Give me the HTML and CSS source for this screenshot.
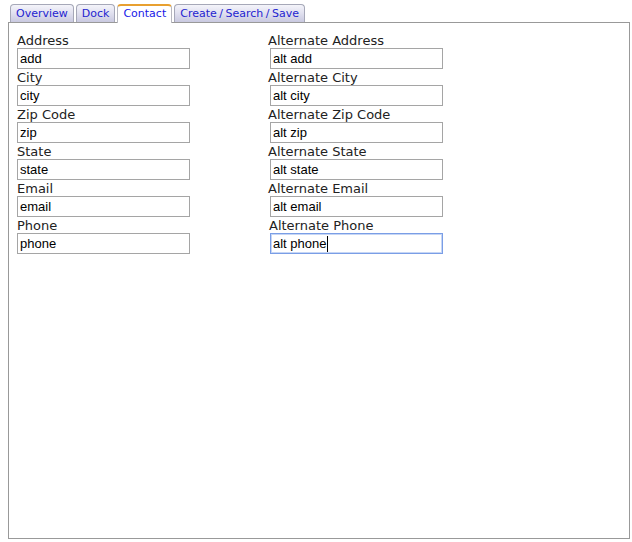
FILE: index.html
```html
<!DOCTYPE html>
<html>
<head>
<meta charset="utf-8">
<link rel="stylesheet" href="styles.css">
</head>
<body>
<div class="tabbar">
  <div class="tab">Overview</div>
  <div class="tab">Dock</div>
  <div class="tab selected">Contact</div>
  <div class="tab">Create<span class="sl">/</span>Search<span class="sl">/</span>Save</div>
  <div class="tab-rest"></div>
</div>
<div class="panel">
  <div class="form">
    <div class="col left">
      <label class="lbl">Address</label>
      <input class="field" type="text" value="add">
      <label class="lbl">City</label>
      <input class="field" type="text" value="city">
      <label class="lbl">Zip Code</label>
      <input class="field" type="text" value="zip">
      <label class="lbl">State</label>
      <input class="field" type="text" value="state">
      <label class="lbl">Email</label>
      <input class="field" type="text" value="email">
      <label class="lbl">Phone</label>
      <input class="field" type="text" value="phone">
    </div>
    <div class="col right">
      <label class="lbl">Alternate Address</label>
      <input class="field" type="text" value="alt add">
      <label class="lbl">Alternate City</label>
      <input class="field" type="text" value="alt city">
      <label class="lbl">Alternate Zip Code</label>
      <input class="field" type="text" value="alt zip">
      <label class="lbl">Alternate State</label>
      <input class="field" type="text" value="alt state">
      <label class="lbl">Alternate Email</label>
      <input class="field" type="text" value="alt email">
      <label class="lbl shifted">Alternate Phone</label>
      <div class="focus-wrap">
        <input class="field focused" type="text" value="alt phone">
        <span class="caret"></span>
      </div>
    </div>
  </div>
</div>
</body>
</html>
```

FILE: styles.css
```css
html, body {
  margin: 0;
  padding: 0;
  background: #fff;
}
body {
  padding: 4px 0 0 8px;
  font-family: "DejaVu Sans", Verdana, sans-serif;
}
.tabbar {
  display: flex;
  align-items: flex-end;
  width: 622px;
  height: 18px;
}
.tab {
  box-sizing: border-box;
  height: 18px;
  margin-left: 2px;
  padding: 0 5px;
  border: 1px solid #a6a8b8;
  border-bottom: none;
  border-radius: 4px 4px 0 0;
  background: linear-gradient(to bottom, #f4f4fa 0%, #e2e2f0 45%, #c9c9e0 100%);
  color: #2424d0;
  font-size: 11px;
  line-height: 17px;
  white-space: nowrap;
}
.tab .sl {
  margin: 0 2.5px;
}
.tab.selected {
  background: #fff;
  border-top: 2px solid #e8a030;
  border-left-color: #b8b8c0;
  border-right-color: #b8b8c0;
  line-height: 16px;
  height: 19px;
  margin-bottom: -1px;
  position: relative;
  color: #1818e8;
}
.tab-rest {
  flex: 1;
}
.panel {
  box-sizing: border-box;
  width: 622px;
  height: 517px;
  border: 1px solid #999;
  padding: 9px 8px 0 8px;
}
.form {
  display: flex;
}
.col {
  display: flex;
  flex-direction: column;
  align-items: flex-start;
}
.col.left {
  width: 251px;
}
.lbl {
  font-size: 13px;
  line-height: 18px;
  height: 16px;
  overflow: visible;
  color: #222;
  white-space: nowrap;
}
.lbl.shifted {
  margin-left: 1px;
}
.col.right > .field,
.col.right > .focus-wrap {
  margin-left: 2px;
}
.field {
  box-sizing: border-box;
  width: 173px;
  height: 21px;
  margin: 0;
  padding: 0 2px;
  border: 1px solid #a5a5a5;
  font-family: "Liberation Sans", Arial, sans-serif;
  font-size: 13px;
  color: #000;
  outline: none;
  background: #fff;
}
.field.focused {
  border-color: #7a9ee6;
  box-shadow: 0 0 0 1px #c6d6f5 inset;
}
.focus-wrap {
  position: relative;
  height: 21px;
}
.caret {
  position: absolute;
  left: 57px;
  top: 3px;
  width: 1px;
  height: 16px;
  background: #000;
}
```
